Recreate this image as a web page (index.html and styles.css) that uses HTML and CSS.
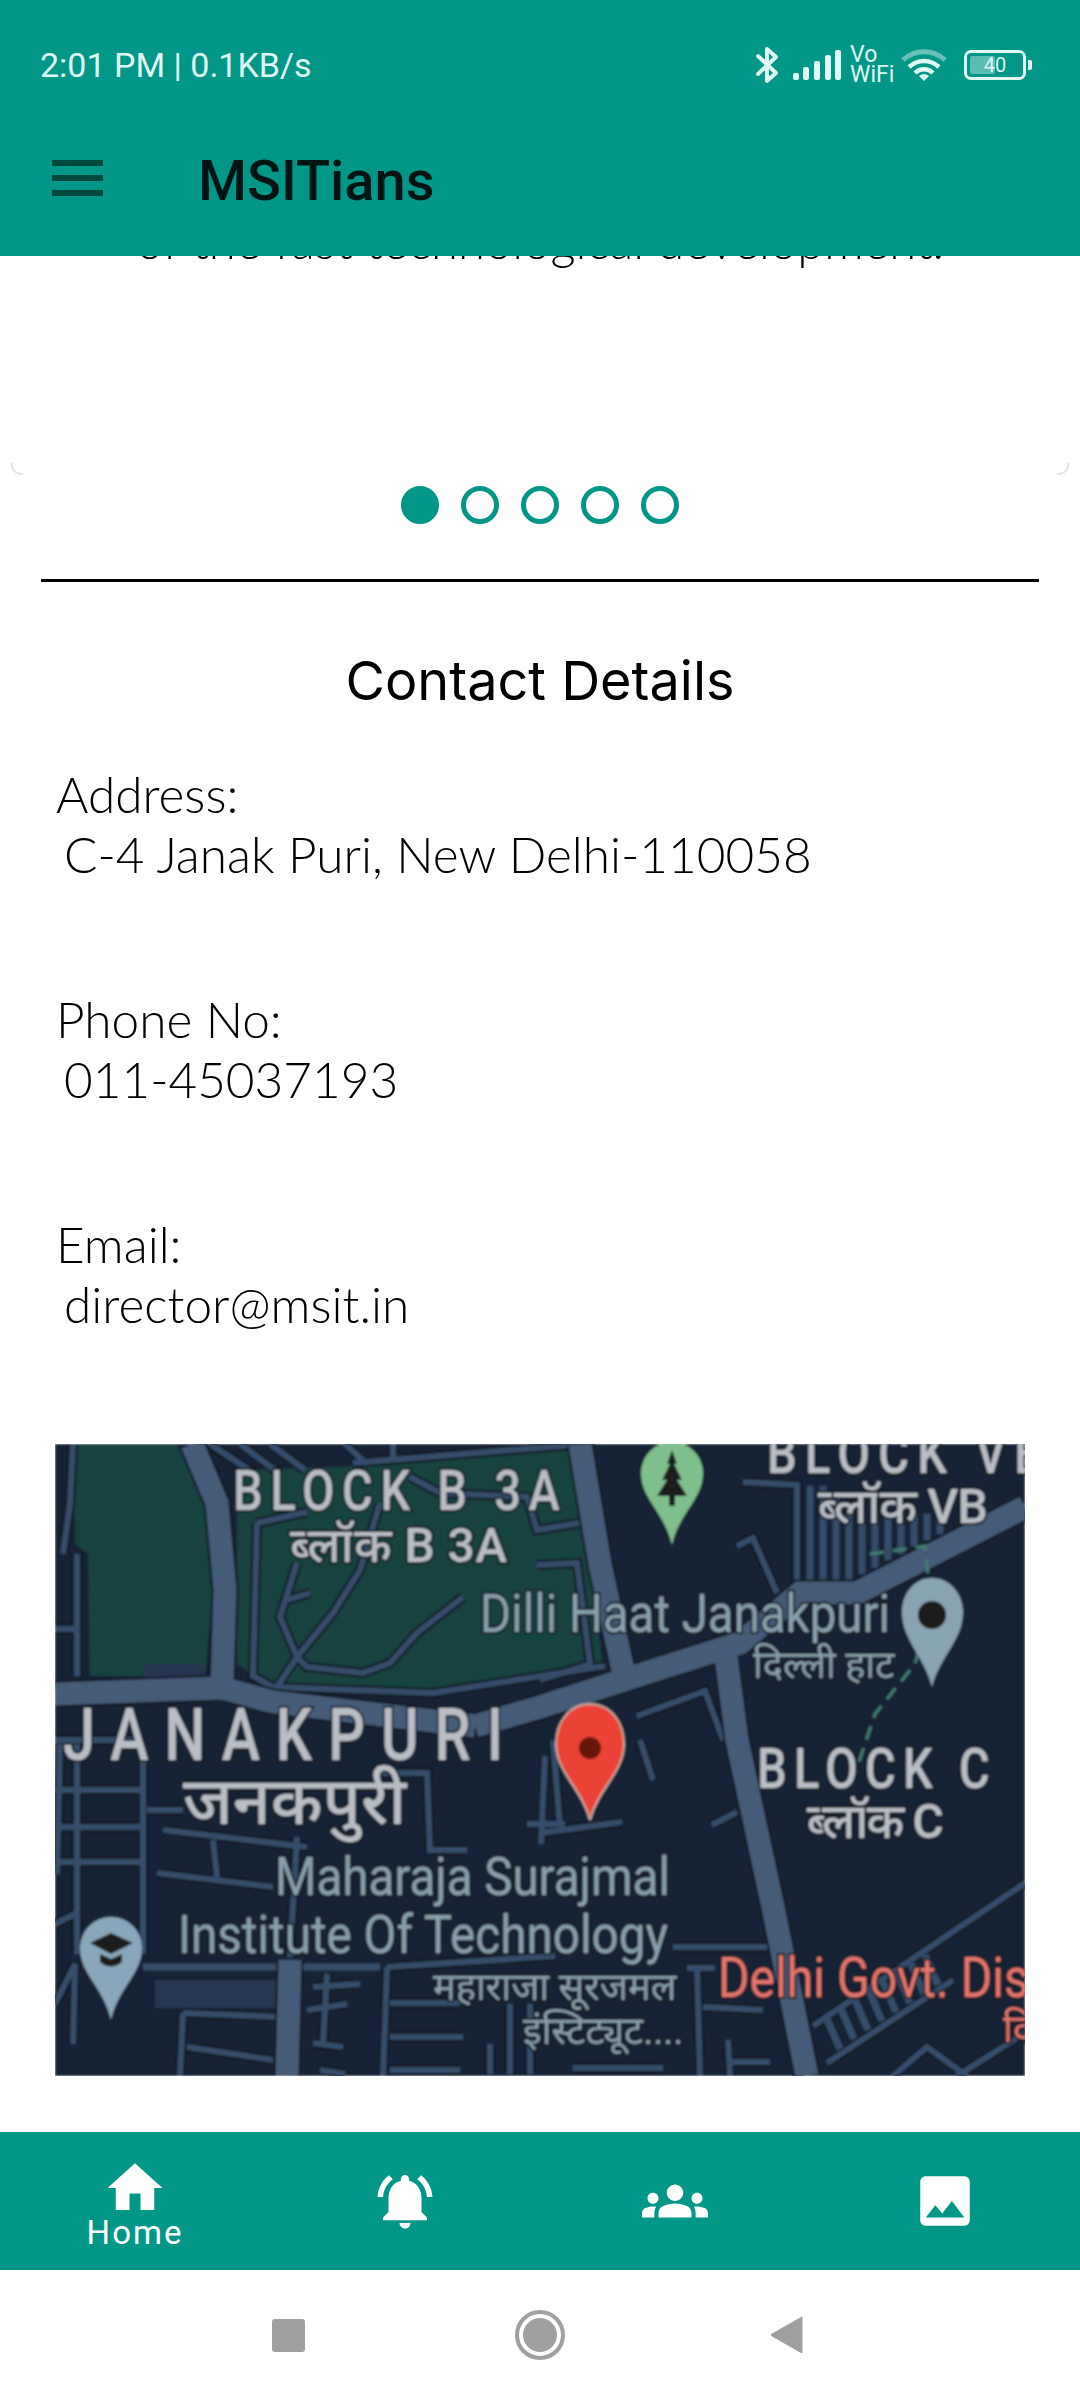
FILE: index.html
```html
<!DOCTYPE html>
<html lang="en">
<head>
  <meta charset="UTF-8">
  <meta name="viewport" content="width=device-width, initial-scale=1.0">
  <title>MSITians</title>
  <link rel="stylesheet" href="styles.css">
</head>
<body>
<div class="app">

  <header class="appbar">
    <div class="status">
      <span class="status-text">2:01 PM | 0.1KB/s</span>
      <div class="status-icons">
        <svg class="ic-bt" width="24" height="38" viewBox="0 0 24 38"><path d="M2 10 20 27 11 35V3l9 8L2 28" fill="none" stroke="#e0f7f4" stroke-width="4" stroke-linecap="round" stroke-linejoin="round"/></svg>
        <svg class="ic-signal" width="48" height="30" viewBox="0 0 48 30"><g fill="#e0f7f4"><rect x="0" y="23" width="6" height="7" rx="2"/><rect x="10" y="17" width="6" height="13" rx="2"/><rect x="21" y="11" width="6" height="19" rx="2"/><rect x="32" y="5" width="6" height="25" rx="2"/><rect x="42" y="0" width="6" height="30" rx="2"/></g></svg>
        <div class="vowifi"><span>Vo</span><span>WiFi</span></div>
        <svg class="ic-wifi" width="46" height="34" viewBox="0 0 46 34"><path d="M2 12C14 1 32 1 44 12" fill="none" stroke="#e0f7f4" stroke-opacity=".45" stroke-width="5"/><path d="M8 19C17 11 29 11 38 19" fill="none" stroke="#e0f7f4" stroke-width="4.5"/><path d="M14 25C19 20 27 20 32 25" fill="none" stroke="#e0f7f4" stroke-width="4.5"/><path d="M18 28Q23 24 28 28L23 33Z" fill="#e0f7f4"/></svg>
        <div class="battery">
          <div class="battery-body"><span class="battery-level"></span><span class="battery-num">40</span></div>
          <span class="battery-tip"></span>
        </div>
      </div>
    </div>
    <div class="toolbar">
      <div class="burger"><i></i><i></i><i></i></div>
      <h1 class="app-title">MSITians</h1>
    </div>
  </header>

  <main class="content">
    <section class="card">
      <p class="card-text">of the fast technological development.</p>
    </section>

    <div class="dots">
      <span class="dot on"></span><span class="dot"></span><span class="dot"></span><span class="dot"></span><span class="dot"></span>
    </div>

    <hr class="rule">

    <h2 class="section-title">Contact Details</h2>

    <div class="detail">Address:<br><span class="val">C-4 Janak Puri, New Delhi-110058</span></div>
    <div class="detail">Phone No:<br><span class="val">011-45037193</span></div>
    <div class="detail">Email:<br><span class="val">director@msit.in</span></div>

    <svg class="map" viewBox="0 0 970 632" width="970" height="632">
      <defs>
        <filter id="soft" x="0" y="0" width="100%" height="100%"><feGaussianBlur stdDeviation="0.9"/></filter>
        <path id="pin" d="M-31 0A31 31 0 1 1 31 0C31 26 7 40 0 72C-7 40-31 26-31 0Z"/>
        <g id="thick">
          <path d="M137 0 162 59 170 146 167 240"/>
          <path d="M0 250 167 244 218 258 420 282"/>
          <path d="M525 0 545 120 568 226"/>
          <path d="M420 282 485 263 578 233 685 199 745 149 802 149 970 63"/>
          <path d="M670 205 682 296 718 463 752 632"/>
          <path d="M235 516 232 632"/>
        </g>
        <g id="thin">
          <path d="M202 79 198 232 218 243 378 249 505 229 550 222"/>
          <path d="M202 79 252 68"/>
          <path d="M355 33 385 49 472 53 482 86 530 78"/>
          <path d="M242 119 225 173 242 213 252 223 308 229 335 219 362 189 408 153"/>
          <path d="M325 59 305 126 278 169 242 213 218 249"/>
          <path d="M232 156 255 149"/>
          <path d="M482 121 522 119 535 220 485 236"/>
          <path d="M298 19 530 0"/>
          <path d="M155 0 200 30M185 0 225 30M215 0 250 26M290 0 312 20M338 0V18"/>
          <path d="M18 0 15 60 8 110M22 110V232"/>
          <path d="M0 185H22"/>
          <path d="M688 38 742 41V143"/>
          <path d="M682 102 698 94 722 149"/>
          <path d="M582 272 650 247 668 296"/>
          <path d="M585 296 598 336"/>
          <path d="M485 389 567 378"/>
          <path d="M498 296 505 383"/>
          <path d="M657 381 682 368"/>
          <path d="M618 503H715"/>
          <path d="M632 524H660M642 524 645 632"/>
          <path d="M648 563 708 566"/>
          <path d="M673 596 675 632M675 618H715"/>
          <path d="M758 582 970 439"/>
          <path d="M772 619 898 536"/>
          <path d="M838 632 872 603 912 632"/>
          <path d="M902 632 970 589"/>
          <path d="M22 300V510M5 300 2 430M88 316V510"/>
          <path d="M0 346H88M0 383H88M0 418H88M0 296H88"/>
          <path d="M92 366H128M108 386 252 403M102 429 218 443M158 396 162 433"/>
          <path d="M318 329H372L375 406H412"/>
          <path d="M242 393 235 513"/>
          <path d="M332 523 328 632"/>
          <path d="M335 559H405M335 593H408M335 626H405"/>
          <path d="M128 569 225 573M128 569 125 632M132 603 218 616"/>
          <path d="M258 543 305 540M252 566 292 560M258 599 288 603M265 626 290 630M272 530 268 600"/>
          <path d="M332 523 500 512"/>
          <path d="M518 624H608"/>
          <path d="M455 560V630M475 560V630M435 600V630"/>
          <path d="M490 312 486 400M472 380H510"/>
          <path d="M0 480 20 470M0 560 20 520 18 600"/>
        </g>
      </defs>
      <g filter="url(#soft)">
        <rect width="970" height="632" fill="#192434"/>
        <path d="M18 0H122L150 60 158 150 150 232 35 232 33 110 20 100Z" fill="#15423f"/>
        <path d="M182 26 318 22 505 4 518 0 548 222 490 232 385 250 212 240 182 220Z" fill="#15423f"/>
        <rect x="100" y="536" width="140" height="28" fill="#25384f"/>
        <rect x="90" y="220" width="60" height="14" fill="#27364f"/>

        <g class="casing-thin"><use href="#thin"/></g>
        <g class="road-thin"><use href="#thin"/></g>
        <path class="comb" d="M755 42V140M768 42V140M781 50V140M794 60V136M807 70V130M820 70V124M833 70V116M846 70V110M859 70V102M872 70V96M885 70V90"/>
        <path class="comb" d="M772 575 785 605M786 565 799 595M800 556 813 586M814 547 827 577M828 538 841 568M842 529 855 559M856 520 869 550M870 511 883 541"/>
        <path class="comb" d="M88 523H325"/>
        <g class="casing-thick"><use href="#thick"/></g>
        <g class="road-thick"><use href="#thick"/></g>

        <path class="trail" d="M815 110 870 102 876 160 860 220 820 270 800 330"/>

        <g class="label label-block">
          <text transform="translate(178 66) scale(.84 1)" textLength="389" lengthAdjust="spacing">BLOCK B 3A</text>
          <text transform="translate(712 29) scale(.84 1)" letter-spacing="10">BLOCK VB</text>
          <text transform="translate(702 344) scale(.84 1)" textLength="277" lengthAdjust="spacing">BLOCK C</text>
        </g>
        <g class="label label-sub">
          <text x="235" y="118" textLength="217" lengthAdjust="spacing">ब्लॉक B 3A</text>
          <text x="762" y="79" textLength="170" lengthAdjust="spacing">ब्लॉक VB</text>
          <text x="750" y="394" textLength="137" lengthAdjust="spacing">ब्लॉक C</text>
        </g>
        <g class="label label-area">
          <text transform="translate(8 316) scale(.8 1)" textLength="550" lengthAdjust="spacing">JANAKPURI</text>
          <text x="128" y="380" class="area-hi">जनकपुरी</text>
        </g>
        <g class="label label-poi">
          <text x="425" y="188" textLength="410" lengthAdjust="spacingAndGlyphs">Dilli Haat Janakpuri</text>
          <text x="698" y="234" class="poi-hi">दिल्ली हाट</text>
          <text x="220" y="451" textLength="395" lengthAdjust="spacingAndGlyphs">Maharaja Surajmal</text>
          <text x="123" y="509" textLength="490" lengthAdjust="spacingAndGlyphs">Institute Of Technology</text>
          <text x="378" y="556" class="poi-hi">महाराजा सूरजमल</text>
          <text x="468" y="600" class="poi-hi">इंस्टिट्यूट....</text>
        </g>
        <g class="label label-red">
          <text transform="translate(663 553) scale(.86 1)">Delhi Govt. Dispensary</text>
          <text x="948" y="598" class="red-hi">दिल्ली</text>
        </g>

        <use href="#pin" transform="translate(617 29)" fill="#7fbf8c"/>
        <path d="M617 6 622 20H619L627 36H622L632 52H620V62H614V52H602L612 36H607L615 20H612Z" fill="#1b1b1b"/>
        <path d="M877 134C895 134 908 150 908 168C908 196 885 212 877 243C869 212 847 196 847 168C847 150 859 134 877 134Z" fill="#88a3b2"/>
        <circle cx="877" cy="171" r="14" fill="#1c1c1e"/>
        <use href="#pin" transform="translate(56 504)" fill="#88a7ba"/>
        <path d="M35 499 56 489 78 499 56 510Z" fill="#1b1b1b"/>
        <path d="M45 510V518Q56 527 67 518V510L56 515Z" fill="#1b1b1b"/>
        <path d="M535 260C557 260 569 280 569 300C569 328 543 345 535 376C527 345 501 328 501 300C501 280 513 260 535 260Z" fill="#ea4335" stroke="#c9a8a0" stroke-width="2"/>
        <circle cx="535" cy="304" r="11" fill="#66120e"/>
      </g>
    </svg>
  </main>

  <nav class="bottom-nav">
    <div class="tab on">
      <svg class="tab-icon" viewBox="0 0 24 24"><path d="M10 20v-6h4v6h5v-8h3L12 3 2 12h3v8z"/></svg>
      <span class="tab-label">Home</span>
    </div>
    <div class="tab">
      <svg class="tab-icon" viewBox="0 0 24 24"><path d="M7.58 4.08L6.15 2.65C3.75 4.48 2.17 7.3 2.03 10.5h2c.15-2.65 1.51-4.97 3.55-6.42zm12.39 6.42h2c-.15-3.2-1.73-6.02-4.12-7.85l-1.42 1.43c2.02 1.45 3.39 3.77 3.54 6.42zM18 11c0-3.07-1.64-5.64-4.5-6.32V4c0-.83-.67-1.5-1.5-1.5s-1.5.67-1.5 1.5v.68C7.63 5.36 6 7.92 6 11v5l-2 2v1h16v-1l-2-2v-5zm-6 11c.14 0 .27-.01.4-.04.65-.14 1.18-.58 1.44-1.18.1-.24.15-.5.15-.78h-4c.01 1.1.9 2 2.01 2z"/></svg>
    </div>
    <div class="tab">
      <svg class="tab-icon" viewBox="0 0 24 24"><path d="M4 13c1.1 0 2-.9 2-2 0-1.1-.9-2-2-2s-2 .9-2 2c0 1.1.9 2 2 2zm1.13 1.1c-.37-.06-.74-.1-1.13-.1-.99 0-1.93.21-2.78.58C.48 14.9 0 15.62 0 16.43V18h4.5v-1.61c0-.83.23-1.61.63-2.29zM20 13c1.1 0 2-.9 2-2 0-1.1-.9-2-2-2s-2 .9-2 2c0 1.1.9 2 2 2zm4 3.43c0-.81-.48-1.53-1.22-1.85-.85-.37-1.79-.58-2.78-.58-.39 0-.76.04-1.13.1.4.68.63 1.46.63 2.29V18H24v-1.57zm-7.76-2.65c-1.17-.52-2.61-.9-4.24-.9-1.63 0-3.07.39-4.24.9C6.68 14.13 6 15.21 6 16.39V18h12v-1.61c0-1.18-.68-2.26-1.76-2.61zM12 12c1.66 0 3-1.34 3-3s-1.34-3-3-3-3 1.34-3 3 1.34 3 3 3z"/></svg>
    </div>
    <div class="tab">
      <svg class="tab-icon" viewBox="0 0 24 24"><path d="M21 19V5c0-1.1-.9-2-2-2H5c-1.1 0-2 .9-2 2v14c0 1.1.9 2 2 2h14c1.1 0 2-.9 2-2zM8.5 13.5l2.5 3.01L14.5 12l4.5 6H5l3.5-4.5z"/></svg>
    </div>
  </nav>

  <footer class="sys-nav">
    <span class="sys-square"></span>
    <span class="sys-circle"><i></i></span>
    <svg class="sys-back" width="34" height="38" viewBox="0 0 34 38"><path d="M32 1V37L2 20Q0 19 2 18Z" fill="#a0a0a0" stroke="#a0a0a0" stroke-linejoin="round"/></svg>
  </footer>

</div>
</body>
</html>
```

FILE: styles.css
```css
* {
  box-sizing: border-box;
}
body {
  margin: 0;
  background: #fff;
  font-family: Lato, sans-serif;
  color: #000;
}
.app {
  width: 1080px;
  height: 2400px;
  display: flex;
  flex-direction: column;
  overflow: hidden;
}

/* top bar */
.appbar {
  height: 256px;
  flex: none;
  background: #009688;
  position: relative;
}
.status {
  height: 130px;
  padding: 44px 48px 0 40px;
  display: flex;
  justify-content: space-between;
  align-items: flex-start;
}
.status-text {
  font-family: Roboto, sans-serif;
  font-size: 34px;
  line-height: 42px;
  color: #e0f7f4;
}
.status-icons {
  display: flex;
  align-items: center;
  height: 42px;
}
.ic-bt {
  margin-right: 13px;
}
.ic-signal {
  margin-right: 9px;
}
.vowifi {
  display: flex;
  flex-direction: column;
  width: 43px;
  margin-right: 8px;
  font-family: Roboto, sans-serif;
  font-size: 23px;
  line-height: 20px;
  color: #e0f7f4;
}
.ic-wifi {
  margin-right: 17px;
}
.battery {
  display: flex;
  align-items: center;
}
.battery-body {
  width: 62px;
  height: 30px;
  border: 3px solid #e0f7f4;
  border-radius: 7px;
  position: relative;
  display: flex;
  align-items: center;
  justify-content: center;
}
.battery-level {
  position: absolute;
  left: 3px;
  top: 3px;
  bottom: 3px;
  width: 25px;
  background: rgba(224, 247, 244, 0.4);
  border-radius: 2px;
}
.battery-num {
  position: relative;
  font-family: Roboto, sans-serif;
  font-size: 20px;
  line-height: 20px;
  color: #e0f7f4;
}
.battery-tip {
  width: 4px;
  height: 10px;
  margin-left: 2px;
  background: #e0f7f4;
  border-radius: 0 2px 2px 0;
}
.toolbar {
  display: flex;
  align-items: center;
  height: 100px;
  padding-left: 52px;
}
.burger {
  width: 51px;
  display: flex;
  flex-direction: column;
  gap: 9px;
  margin-top: -5px;
}
.burger i {
  display: block;
  height: 6px;
  background: #00493f;
}
.app-title {
  margin: 2px 0 0 95px;
  font-family: Roboto, sans-serif;
  font-size: 56px;
  font-weight: 500;
  color: #001413;
}

/* scrolled page */
.content {
  flex: 1;
  overflow: hidden;
}
.card {
  height: 219px;
  margin: 0 11px;
  overflow: hidden;
  background: #fff;
  position: relative;
}
.card::before,
.card::after {
  content: "";
  position: absolute;
  bottom: 0;
  width: 10px;
  height: 10px;
  border-bottom: 2px solid #e2e2e2;
}
.card::before {
  left: 0;
  border-left: 2px solid #e2e2e2;
  border-bottom-left-radius: 10px;
}
.card::after {
  right: 0;
  border-right: 2px solid #e2e2e2;
  border-bottom-right-radius: 10px;
}
.card-text {
  margin: -46px 0 0;
  text-align: center;
  font-size: 49px;
  font-weight: 300;
  line-height: 60px;
}
.dots {
  display: flex;
  justify-content: center;
  gap: 22px;
  margin-top: 11px;
}
.dot {
  width: 38px;
  height: 38px;
  border-radius: 50%;
  border: 5px solid #009688;
}
.dot.on {
  background: #009688;
}
.rule {
  height: 3px;
  margin: 55px 41px 0;
  border: 0;
  background: #000;
}
.section-title {
  margin: 64px 0 0;
  text-align: center;
  font-family: Inter, Lato, sans-serif;
  font-size: 54px;
  font-weight: 400;
  line-height: 70px;
}
.detail {
  margin: 0 0 106px 56px;
  font-size: 49.5px;
  font-weight: 300;
  line-height: 59.5px;
}
.section-title + .detail {
  margin-top: 49px;
}
.val {
  margin-left: 8px;
}
.map {
  display: block;
  margin: 110px 0 0 55px;
}

/* map drawing */
.map .casing-thin {
  fill: none;
  stroke: #101824;
  stroke-width: 10;
}
.map .road-thin {
  fill: none;
  stroke: #344d6a;
  stroke-width: 6;
}
.map .casing-thick {
  fill: none;
  stroke: #101824;
  stroke-width: 27;
}
.map .road-thick {
  fill: none;
  stroke: #445b78;
  stroke-width: 23;
}
.map .comb {
  fill: none;
  stroke: #344d6a;
  stroke-width: 7;
}
.map .trail {
  fill: none;
  stroke: #3f7f70;
  stroke-width: 3;
  stroke-dasharray: 14 9;
}
.label text {
  font-family: Roboto, "Noto Sans", sans-serif;
  paint-order: stroke;
  stroke: #141c28;
  stroke-width: 4px;
}
.label-block text {
  font-size: 56px;
  font-weight: 500;
  fill: #b9bdc5;
}
.label-sub text {
  font-size: 48px;
  font-weight: 500;
  fill: #b9bdc5;
}
.label-area text {
  font-size: 72px;
  font-weight: 500;
  fill: #b9bdc5;
}
.label-area .area-hi {
  font-size: 66px;
}
.label-poi text {
  font-size: 54px;
  fill: #88a0ad;
}
.label-poi .poi-hi {
  font-size: 38px;
}
.label-red text {
  font-size: 56px;
  fill: #e5766b;
}
.label-red .red-hi {
  font-size: 38px;
}

/* bottom tabs */
.bottom-nav {
  height: 138px;
  flex: none;
  background: #009688;
  display: grid;
  grid-template-columns: repeat(4, 1fr);
}
.tab {
  display: flex;
  flex-direction: column;
  align-items: center;
  justify-content: center;
}
.tab-icon {
  width: 66px;
  height: 66px;
  fill: #fff;
}
.tab.on {
  justify-content: flex-start;
  padding-top: 23px;
}
.tab-label {
  margin-top: -8px;
  font-family: Roboto, sans-serif;
  font-size: 33px;
  letter-spacing: 2px;
  line-height: 40px;
  color: #fff;
}

/* android buttons */
.sys-nav {
  height: 130px;
  flex: none;
  background: #fff;
  display: flex;
  align-items: center;
  padding-left: 272px;
}
.sys-square {
  width: 33px;
  height: 33px;
  background: #a0a0a0;
  border-radius: 3px;
}
.sys-circle {
  width: 50px;
  height: 50px;
  margin: 0 205px 0 210px;
  border: 4px solid #a0a0a0;
  border-radius: 50%;
  padding: 4px;
}
.sys-circle i {
  display: block;
  width: 100%;
  height: 100%;
  border-radius: 50%;
  background: #a0a0a0;
}
```
